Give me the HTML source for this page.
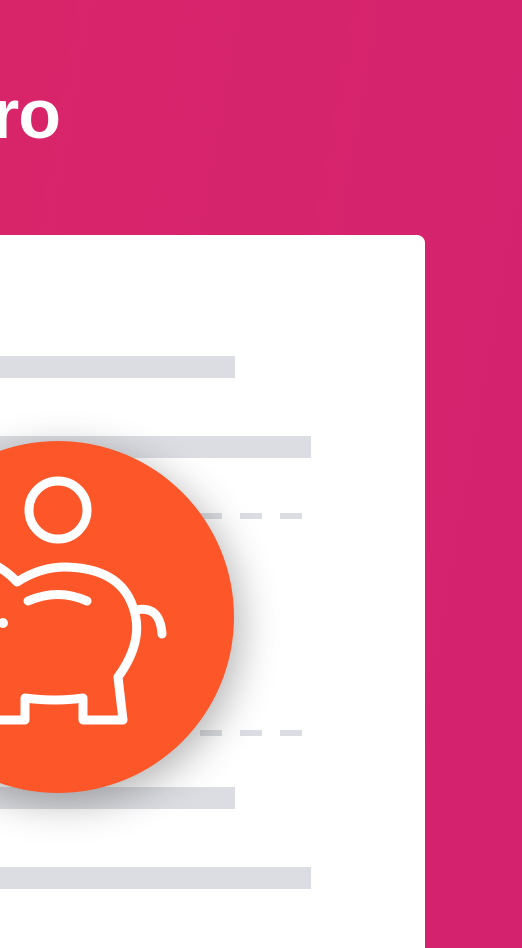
<!DOCTYPE html>
<html><head><style>
html,body{margin:0;padding:0;width:522px;height:948px;overflow:hidden}
body{position:relative;background:linear-gradient(100deg,#d8256a,#d4226f);font-family:"Liberation Sans",sans-serif}
.t{position:absolute;left:-8px;top:74px;font-size:70px;font-weight:bold;color:#fff;letter-spacing:-1px}
.card{position:absolute;left:-20px;top:235px;width:445px;height:760px;background:#fff;border-radius:8px}
.bar{position:absolute;left:0;height:22px;background:#dcdde2}
.dash{position:absolute;height:6px;width:22px;background:#dcdde2}
.circ{position:absolute;left:-118px;top:441px;width:352px;height:352px;border-radius:50%;background:#fc5629;box-shadow:6px 10px 40px rgba(0,0,0,.3)}
</style></head><body>
<div class="t">ro</div>
<div class="card"></div>
<div class="bar" style="top:356px;width:235px"></div>
<div class="bar" style="top:436px;width:311px"></div>
<div class="dash" style="left:200px;top:513px"></div>
<div class="dash" style="left:240px;top:513px"></div>
<div class="dash" style="left:280px;top:513px"></div>
<div class="dash" style="left:200px;top:730px"></div>
<div class="dash" style="left:240px;top:730px"></div>
<div class="dash" style="left:280px;top:730px"></div>
<div class="bar" style="top:787px;width:235px"></div>
<div class="bar" style="top:867px;width:311px"></div>
<div class="circ"></div>
<svg style="position:absolute;left:0;top:0" width="522" height="948" fill="none" stroke="#fff" stroke-width="9" stroke-linecap="round" stroke-linejoin="round">
<circle cx="58" cy="510" r="29"/>
<path d="M-5 565 Q8 572 17 582 Q40 567 65 567 Q120 568 133 607 Q145 640 118 677 L123 720 L83 720 L83 698 Q55 702 25 698 L25 720 L-5 720"/>
<path d="M136 610 Q160 605 162 634"/>
<path d="M28 601 Q58 588 87 601"/>
<circle cx="3" cy="623" r="5" fill="#fff" stroke="none"/>
</svg>
</body></html>
